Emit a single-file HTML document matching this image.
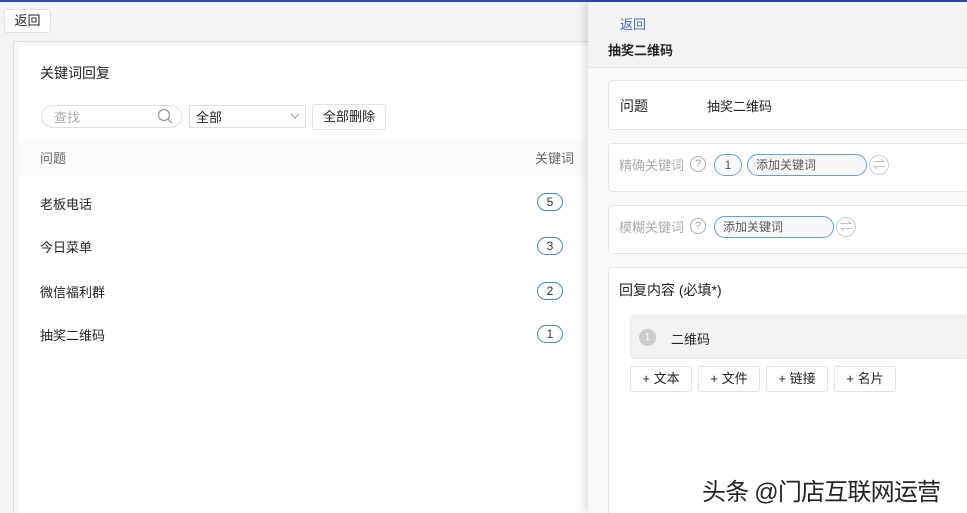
<!DOCTYPE html><html><head><meta charset="utf-8"><style>
*{box-sizing:border-box;margin:0;padding:0}
html,body{width:967px;height:513px;overflow:hidden}
body{background:#f4f4f4;font-family:"Liberation Sans","Noto Sans CJK SC",sans-serif;font-size:13px;color:#222;position:relative}
.a{position:absolute;white-space:nowrap}
.bar{left:0;top:0;width:967px;height:2px;background:#2a4fa0}
.btn{background:#fff;border:1px solid #e2e2e2;border-radius:3px}
.badge{width:26px;height:18px;border:1px solid #4a8ab8;border-radius:9px;text-align:center;line-height:16px;font-size:12px;color:#333}
.card{background:#fff;border:1px solid #e6e6e6;border-radius:4px;left:608px;width:370px}
.gray{color:#aaa}
.pill{border:1px solid #6aa0c8;border-radius:11px;height:22px;line-height:20px;padding-left:8px;font-size:12px;color:#555;background:#f6f8fb}
.sw{width:20px;height:20px;border:1px solid #ccc;border-radius:50%;color:#bbb;text-align:center;line-height:17px;font-size:13px}
.q{width:16px;height:16px;border:1px solid #aaa;border-radius:50%;color:#999;text-align:center;line-height:14px;font-size:11px}
.add{height:26px;line-height:24px;text-align:center;font-size:13px;top:366px;width:62px}
</style></head><body>
<div class="a bar"></div>
<div class="a btn" style="left:4px;top:9px;width:47px;height:24px;line-height:22px;text-align:center">返回</div>
<div class="a" style="left:13px;top:41px;width:580px;height:472px;border:1px solid #ddd;border-bottom:none;background:#f7f7f7"></div>
<div class="a" style="left:19px;top:46px;width:570px;height:51px;background:#fff;border-radius:4px"></div>
<div class="a" style="left:40px;top:63px;font-size:14px">关键词回复</div>
<div class="a" style="left:19px;top:97px;width:570px;height:416px;background:#fff"></div>
<div class="a" style="left:41px;top:105px;width:141px;height:23px;border:1px solid #ddd;border-radius:12px"></div>
<div class="a gray" style="left:54px;top:107px">查找</div>
<svg class="a" style="left:157px;top:108px" width="17" height="17"><circle cx="7" cy="7" r="5.5" fill="none" stroke="#999" stroke-width="1.3"/><line x1="11" y1="11" x2="15" y2="15" stroke="#999" stroke-width="1.3"/></svg>
<div class="a" style="left:189px;top:105px;width:117px;height:23px;border:1px solid #ddd"></div>
<div class="a" style="left:196px;top:107px">全部</div>
<svg class="a" style="left:290px;top:112px" width="10" height="8"><path d="M1 2L5 6L9 2" fill="none" stroke="#999"/></svg>
<div class="a btn" style="left:312px;top:104px;width:74px;height:26px;line-height:24px;text-align:center">全部删除</div>
<div class="a" style="left:19px;top:139px;width:570px;height:38px;background:#fbfbfb"></div>
<div class="a" style="left:40px;top:148px;color:#666">问题</div>
<div class="a" style="left:535px;top:148px;color:#666">关键词</div>
<div class="a" style="left:40px;top:194px">老板电话</div><div class="a badge" style="left:537px;top:193px">5</div>
<div class="a" style="left:40px;top:237px">今日菜单</div><div class="a badge" style="left:537px;top:237px">3</div>
<div class="a" style="left:40px;top:282px">微信福利群</div><div class="a badge" style="left:537px;top:282px">2</div>
<div class="a" style="left:40px;top:325px">抽奖二维码</div><div class="a badge" style="left:537px;top:325px">1</div>
<div class="a" style="left:588px;top:2px;width:379px;height:511px;background:#f9f9f9;box-shadow:-4px 0 8px rgba(0,0,0,.12)"></div>
<div class="a" style="left:588px;top:2px;width:379px;height:66px;background:#f3f3f3;border-bottom:1px solid #e6e6e6"></div>
<div class="a" style="left:620px;top:14px;color:#3a6fb0">返回</div>
<div class="a" style="left:608px;top:40px;font-weight:bold">抽奖二维码</div>
<div class="card a" style="top:80px;height:50px"></div>
<div class="a" style="left:620px;top:96px;font-size:14px">问题</div>
<div class="a" style="left:707px;top:96px">抽奖二维码</div>
<div class="card a" style="top:143px;height:49px"></div>
<div class="a gray" style="left:619px;top:155px">精确关键词</div>
<div class="a q" style="left:690px;top:156px">?</div>
<div class="a pill" style="left:714px;top:154px;width:28px;padding-left:0;text-align:center">1</div>
<div class="a pill" style="left:747px;top:154px;width:120px">添加关键词</div>
<div class="a sw" style="left:869px;top:155px">⇌</div>
<div class="card a" style="top:205px;height:49px"></div>
<div class="a gray" style="left:619px;top:217px">模糊关键词</div>
<div class="a q" style="left:690px;top:218px">?</div>
<div class="a pill" style="left:714px;top:216px;width:120px">添加关键词</div>
<div class="a sw" style="left:836px;top:217px">⇌</div>
<div class="card a" style="top:267px;height:250px"></div>
<div class="a" style="left:619px;top:280px;font-size:14px">回复内容 (必填*)</div>
<div class="a" style="left:630px;top:315px;width:340px;height:44px;background:#f3f3f3;border:1px solid #e8e8e8;border-radius:4px"></div>
<div class="a" style="left:639px;top:329px;width:17px;height:17px;border-radius:50%;background:#ccc;color:#fff;font-size:10px;text-align:center;line-height:17px">1</div>
<div class="a" style="left:671px;top:329px">二维码</div>
<div class="a btn add" style="left:630px">+ 文本</div>
<div class="a btn add" style="left:698px">+ 文件</div>
<div class="a btn add" style="left:766px">+ 链接</div>
<div class="a btn add" style="left:834px">+ 名片</div>
<div class="a" style="left:702px;top:472px;font-size:24px;color:#222;letter-spacing:-0.8px">头条 @门店互联网运营</div>
</body></html>
